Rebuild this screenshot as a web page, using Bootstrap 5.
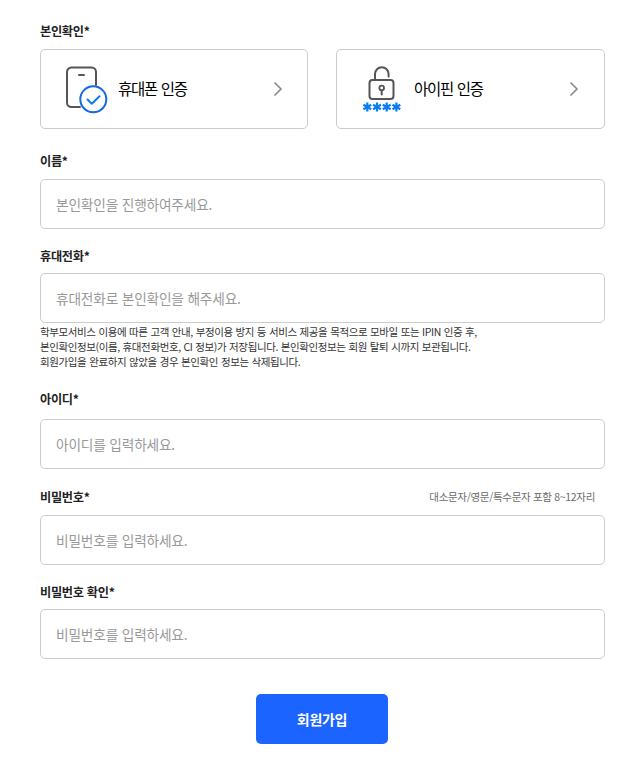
<!DOCTYPE html>
<html lang="ko">
<head>
<meta charset="utf-8">
<meta name="viewport" content="width=device-width, initial-scale=1">
<title>회원가입</title>
<link href="https://cdn.jsdelivr.net/npm/bootstrap@5.3.0/dist/css/bootstrap.min.css" rel="stylesheet">
<style>
  body { font-family: "Noto Sans CJK KR", sans-serif; color: #222; background: #fff; }
  .join-form { width: 565px; margin-left: 40px; padding-top: 22px; }
  .form-label { font-size: 12.2px; line-height: 18px; font-weight: 700; color: #222; margin-bottom: 9px; letter-spacing: -.28px; }
  .mb-8 { margin-bottom: 8px; }
  .mb-12 { margin-bottom: 11px; }
  .field-23 { margin-top: 23px; }
  .field-18 { margin-top: 18px; }
  .field-20 { margin-top: 21px; }
  .field-19 { margin-top: 19px; }
  .verify-grid { gap: 28px; }
  .verify-btn { height: 80px; border: 1px solid #ccc; border-radius: 5px; color: #000; flex: 1 1 0; padding: 0 25px 0 24px; }
  .verify-btn:first-child { flex: 0 0 268px; padding-right: 24px; }
  .verify-name { font-size: 15.5px; letter-spacing: -1.2px; word-spacing: .4px; line-height: 24px; padding-bottom: 3px; }
  .verify-icon { width: 44px; height: 50px; margin-right: 9px; flex: none; }
  .form-control { height: 50px; border: 1px solid #ccc; border-radius: 5px; padding: 0 15px; font-size: 13.7px; letter-spacing: -.18px; color: #222; }
  .form-control::placeholder { color: #999; opacity: 1; }
  .help-text { font-size: 10.5px; letter-spacing: -.4px; word-spacing: .3px; line-height: 15px; margin: 1px 0 0; color: #333; }
  .rule-text { font-size: 10.5px; letter-spacing: -.32px; line-height: 18px; color: #6c6c6c; margin-right: 10px; }
  .btn-join { width: 132px; height: 50px; margin: 35px 0 0 216px; background: #1b64ff; border: 0; border-radius: 5px; color: #fff; font-size: 14px; letter-spacing: -.3px; font-weight: 700; }
  .btn-join:hover { background: #1255e6; color: #fff; }
</style>
</head>
<body>
<form class="join-form">
  <label class="form-label d-block">본인확인*</label>
  <div class="verify-grid d-flex">
    <button type="button" class="verify-btn d-flex align-items-center bg-white">
      <svg class="verify-icon" viewBox="0 0 44 50" fill="none" stroke-linecap="round" stroke-linejoin="round">
        <path d="M31 21V8a4.500 4.500 0 0 0-4.500-4.500h-20A4.500 4.500 0 0 0 2 8v30.500A4.500 4.500 0 0 0 6.500 43H15" stroke="#555" stroke-width="2"/>
        <path d="M14 11h5" stroke="#555" stroke-width="2"/>
        <circle cx="28.300" cy="35.300" r="13" stroke="#1269e0" stroke-width="2"/>
        <path d="M22.500 35.500l4.300 4.300 7.700-7.500" stroke="#0a7cf5" stroke-width="2"/>
      </svg>
      <span class="verify-name">휴대폰 인증</span>
      <svg class="ms-auto" width="10" height="16" viewBox="0 0 10 16" fill="none" stroke="#888" stroke-width="1.600"><path d="M1.500 1.500L8 8l-6.500 6.500"/></svg>
    </button>
    <button type="button" class="verify-btn d-flex align-items-center bg-white">
      <svg class="verify-icon" viewBox="0 0 44 50" fill="none" stroke-linecap="round" stroke-linejoin="round">
        <path d="M14 15.500V10a6.800 6.800 0 0 1 13.600 0v2.500" stroke="#555" stroke-width="2"/>
        <rect x="8.500" y="16" width="24" height="19" rx="3" stroke="#555" stroke-width="2"/>
        <circle cx="20.700" cy="24" r="2.300" stroke="#555" stroke-width="1.800"/>
        <path d="M20.700 26.500v4" stroke="#555" stroke-width="2"/>
        <g stroke="#0a7cf5" stroke-width="2.200" stroke-linecap="butt">
          <path id="star" d="M6.300 38.500v9M2.400 40.750l7.800 4.500M2.400 45.250l7.800-4.500"/>
          <use href="#star" x="9.700"/><use href="#star" x="19.400"/><use href="#star" x="29.100"/>
        </g>
      </svg>
      <span class="verify-name">아이핀 인증</span>
      <svg class="ms-auto" width="10" height="16" viewBox="0 0 10 16" fill="none" stroke="#888" stroke-width="1.600"><path d="M1.500 1.500L8 8l-6.500 6.500"/></svg>
    </button>
  </div>

  <div class="field-23">
    <label class="form-label d-block" for="name">이름*</label>
    <input class="form-control" id="name" type="text" placeholder="본인확인을 진행하여주세요.">
  </div>
  <div class="field-18">
    <label class="form-label mb-8 d-block" for="phone">휴대전화*</label>
    <input class="form-control" id="phone" type="text" placeholder="휴대전화로 본인확인을 해주세요.">
    <p class="help-text">학부모서비스 이용에 따른 고객 안내, 부정이용 방지 등 서비스 제공을 목적으로 모바일 또는 IPIN 인증 후,<br>본인확인정보(이름, 휴대전화번호, CI 정보)가 저장됩니다. 본인확인정보는 회원 탈퇴 시까지 보관됩니다.<br>회원가입을 완료하지 않았을 경우 본인확인 정보는 삭제됩니다.</p>
  </div>
  <div class="field-20">
    <label class="form-label mb-12 d-block" for="userid">아이디*</label>
    <input class="form-control" id="userid" type="text" placeholder="아이디를 입력하세요.">
  </div>
  <div class="field-19">
    <div class="d-flex justify-content-between">
      <label class="form-label" for="pw">비밀번호*</label>
      <span class="rule-text">대소문자/영문/특수문자 포함 8~12자리</span>
    </div>
    <input class="form-control" id="pw" type="password" placeholder="비밀번호를 입력하세요.">
  </div>
  <div class="field-18">
    <label class="form-label mb-8 d-block" for="pw2">비밀번호 확인*</label>
    <input class="form-control" id="pw2" type="password" placeholder="비밀번호를 입력하세요.">
  </div>
  <button type="button" class="btn btn-join d-block">회원가입</button>
</form>
<script src="https://cdn.jsdelivr.net/npm/bootstrap@5.3.0/dist/js/bootstrap.bundle.min.js"></script>
</body>
</html>
